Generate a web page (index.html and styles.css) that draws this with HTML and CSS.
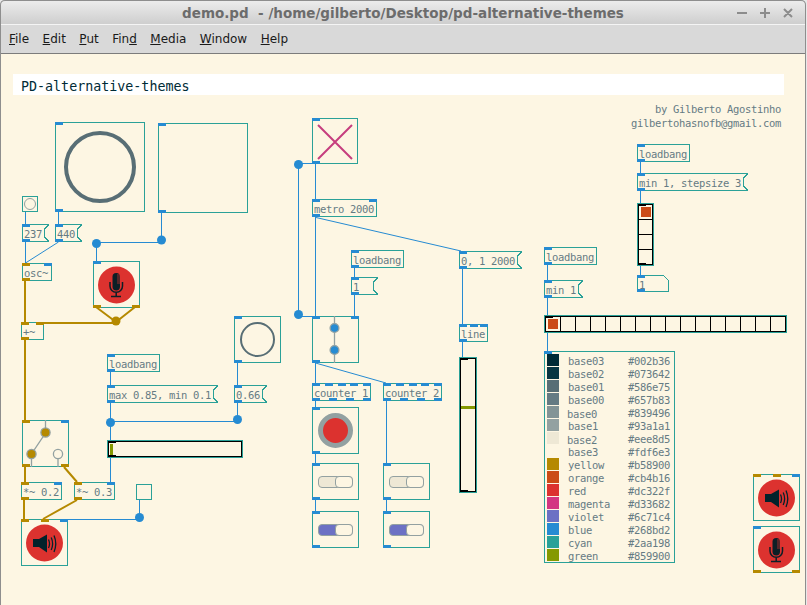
FILE: index.html
```html
<!DOCTYPE html>
<html lang="en">
<head>
  <meta charset="UTF-8" />
  <title>demo.pd - /home/gilberto/Desktop/pd-alternative-themes</title>
  <link rel="stylesheet" href="styles.css">
</head>
<body>

<div class="window">
  <div class="titlebar">
    <span></span>
    <div class="title">demo.pd &nbsp;- /home/gilberto/Desktop/pd-alternative-themes</div>
    <svg class="controls" width="56" height="12" viewBox="0 0 56 12">
      <path d="M0 6H10M23 6H33M28 1V11M47 2L55 10M55 2L47 10" />
    </svg>
  </div>

  <div class="menubar">
    <span><u>F</u>ile</span>
    <span><u>E</u>dit</span>
    <span><u>P</u>ut</span>
    <span>Fin<u>d</u></span>
    <span><u>M</u>edia</span>
    <span><u>W</u>indow</span>
    <span><u>H</u>elp</span>
  </div>

  <div class="canvas">
    <!-- patch cords, drawn under the objects -->
    <svg class="cords" width="806" height="551" viewBox="0 54 806 551">
      <defs>
        <symbol id="mic" viewBox="0 0 47 47">
          <circle cx="23.5" cy="24" r="18.5" fill="#dc322f" />
          <rect x="19.5" y="12" width="7.5" height="17.5" rx="3.7" fill="#0c1f26" />
          <path d="M24 14H27M24 16H27M24 18H27M24 20H27M24 22H27" stroke="#dc322f" stroke-width="0.7" />
          <path d="M17 21V25A6.2 6.2 0 0 0 29.5 25V21M23.2 31.5V35M18 35.5H28" fill="none" stroke="#0c1f26" stroke-width="1.5" />
        </symbol>
        <symbol id="speaker" viewBox="0 0 47 47">
          <circle cx="23.5" cy="24" r="18.5" fill="#dc322f" />
          <path d="M12 20H18L26 15.5V33.5L18 28H12Z" fill="#02222b" />
          <path d="M27.5 20.5Q29.5 24.5 27.5 29M30.2 18.5Q33 24.5 30.2 31M33 16.5Q36.5 24.5 33 33" fill="none" stroke="#02222b" stroke-width="1.3" />
        </symbol>
      </defs>
      <g class="ctl">
        <path d="M25.5 212V224M58.5 212V224M25.5 242V263M58.5 242L25.5 263" />
        <path d="M96.5 243V261M96.5 242.5H161.5M161.5 213V241" />
        <path d="M110.5 372V385M110.5 403V482M110.5 421.5H237.5M237.5 362V385M237.5 403V420" />
        <path d="M139.5 500V518M66 519.5H139.5" />
        <path d="M298.5 164V315M298.5 163.5H312M298.5 316.5H312" />
        <path d="M315.5 164V199M315.5 217V316M316 217.5L461 251" />
        <path d="M354.5 268V277M354.5 295V316M462.5 269V324M462.5 342V357" />
        <path d="M315.5 363V383M315.5 363L386 383M315.5 401V407M315.5 454V463M315.5 500V511" />
        <path d="M386.5 401V463M386.5 500V511" />
        <path d="M547.5 265V280M547.5 298V315M547.5 333V351" />
        <path d="M640.5 162V173M640.5 191V203M640.5 266V275" />
      </g>
      <g class="sig">
        <path d="M25 281V322M25 340V420M36 323H116M96 307L116 322M135 307L116 322" />
        <path d="M25 467V482M64 467L77 482M24 500V519M77 500L43 519" />
      </g>
      <g class="dots">
        <circle cx="96.5" cy="243.5" r="4.5" />
        <circle cx="161.5" cy="240" r="4.5" />
        <circle cx="110.5" cy="422.5" r="4.5" />
        <circle cx="237.5" cy="419.5" r="4.5" />
        <circle cx="139.5" cy="517.5" r="4.5" />
        <circle cx="298.5" cy="164.5" r="4.5" />
        <circle cx="298.5" cy="314.5" r="4.5" />
      </g>
      <circle cx="116" cy="321" r="4.5" fill="#b58900" />
    </svg>

    <div class="comment-bar">PD-alternative-themes</div>
    <div class="credits">by Gilberto Agostinho<br>gilbertohasnofb@gmail.com</div>

    <!-- left column -->
    <div class="node center n-vu1">
      <div class="ring ring-big"></div>
      <div class="ins"><i></i></div>
      <div class="outs"><i></i></div>
    </div>
    <div class="node n-cnv2">
      <div class="ins"><i></i></div>
      <div class="outs"><i></i></div>
    </div>
    <div class="node center n-bng1"><div class="ring ring-tiny"></div></div>
    <div class="node msg n-237">237<div class="ins"><i></i></div><div class="outs"><i></i></div></div>
    <div class="node msg n-440">440<div class="ins"><i></i></div><div class="outs"><i></i></div></div>
    <div class="node n-osc">osc~<div class="ins"><i class="y"></i><i></i></div><div class="outs"><i class="y"></i></div></div>
    <div class="node n-plus">+~<div class="ins"><i class="y"></i><i class="y"></i></div><div class="outs"><i class="y"></i></div></div>

    <div class="node n-mic1">
      <svg class="art" viewBox="0 0 47 47"><use href="#mic" /></svg>
      <div class="ins"><i></i></div>
      <div class="outs"><i class="y"></i><i class="y"></i></div>
    </div>

    <div class="node n-switch">
      <svg class="art" viewBox="0 0 47 47">
        <path class="wire" d="M23.5 0V13L9.5 34V47M36 34V47" />
        <circle class="knob-y" cx="23.5" cy="12.5" r="4.6" />
        <circle class="knob-y" cx="9.5" cy="34" r="4.6" />
        <circle class="knob-off" cx="36" cy="34" r="4.6" />
      </svg>
      <div class="ins"><i class="y"></i><i></i></div>
      <div class="outs"><i class="y"></i><i class="y"></i></div>
    </div>

    <div class="node n-mul2">*~ 0.2<div class="ins"><i class="y"></i><i></i></div><div class="outs"><i class="y"></i></div></div>
    <div class="node n-mul3">*~ 0.3<div class="ins"><i class="y"></i><i></i></div><div class="outs"><i class="y"></i></div></div>
    <div class="node n-bng2"></div>

    <div class="node n-spk1">
      <svg class="art" viewBox="0 0 47 47"><use href="#speaker" /></svg>
      <div class="ins"><i class="y"></i><i class="y"></i><i></i></div>
    </div>

    <div class="node n-lb1">loadbang<div class="ins"><i></i></div><div class="outs"><i></i></div></div>
    <div class="node msg n-max">max 0.85, min 0.1<div class="ins"><i></i></div><div class="outs"><i></i></div></div>
    <div class="node msg n-066">0.66<div class="ins"><i></i></div><div class="outs"><i></i></div></div>
    <div class="node center n-circ2">
      <div class="ring ring-mid"></div>
      <div class="ins"><i></i></div>
      <div class="outs"><i></i></div>
    </div>
    <div class="node slider n-hsl">
      <div class="track"><b class="mark-top"></b><b class="mark-bot"></b><b class="handle handle-h"></b></div>
    </div>

    <!-- middle column -->
    <div class="node n-x">
      <svg class="art" viewBox="0 0 46 46"><path class="cross" d="M6 7L40 41M40 7L6 41" /></svg>
      <div class="ins"><i></i></div>
      <div class="outs"><i></i></div>
    </div>
    <div class="node n-metro">metro 2000<div class="ins"><i></i><i></i></div><div class="outs"><i></i></div></div>
    <div class="node n-lb2">loadbang<div class="ins"><i></i></div><div class="outs"><i></i></div></div>
    <div class="node msg n-one">1<div class="ins"><i></i></div><div class="outs"><i></i></div></div>
    <div class="node msg n-seq">0, 1 2000<div class="ins"><i></i></div><div class="outs"><i></i></div></div>
    <div class="node n-line">line<div class="ins"><i></i><i></i><i></i></div><div class="outs"><i></i></div></div>

    <div class="node n-tgl">
      <svg class="art" viewBox="0 0 47 47">
        <path class="wire" d="M22.5 0V47" />
        <circle class="knob-b" cx="22.5" cy="12" r="4.4" />
        <circle class="knob-b" cx="22.5" cy="34" r="4.4" />
      </svg>
      <div class="ins"><i></i><i></i></div>
      <div class="outs"><i></i></div>
    </div>

    <div class="node n-c1">counter 1
      <div class="ins"><i></i><i></i><i></i><i></i><i></i></div>
      <div class="outs"><i></i><i></i><i></i><i></i></div>
    </div>
    <div class="node n-c2">counter 2
      <div class="ins"><i></i><i></i><i></i><i></i><i></i></div>
      <div class="outs"><i></i><i></i><i></i><i></i></div>
    </div>

    <div class="node center n-rec">
      <div class="ring ring-rec"></div>
      <div class="ins"><i></i></div>
      <div class="outs"><i></i></div>
    </div>

    <div class="node center n-p1a">
      <div class="pill"><span class="pill-knob"></span></div>
      <div class="ins"><i></i></div><div class="outs"><i></i></div>
    </div>
    <div class="node center n-p1b">
      <div class="pill pill-on"><span class="pill-knob"></span></div>
      <div class="ins"><i></i></div><div class="outs"><i></i></div>
    </div>
    <div class="node center n-p2a">
      <div class="pill"><span class="pill-knob"></span></div>
      <div class="ins"><i></i></div><div class="outs"><i></i></div>
    </div>
    <div class="node center n-p2b">
      <div class="pill pill-on"><span class="pill-knob"></span></div>
      <div class="ins"><i></i></div><div class="outs"><i></i></div>
    </div>

    <div class="node slider n-vsl">
      <div class="track"><b class="mark-top"></b><b class="mark-bot"></b><b class="handle handle-v"></b></div>
    </div>

    <!-- right column -->
    <div class="node n-lb3">loadbang<div class="ins"><i></i></div><div class="outs"><i></i></div></div>
    <div class="node msg n-min1">min 1<div class="ins"><i></i></div><div class="outs"><i></i></div></div>
    <div class="node radio n-hrad">
      <div class="cells cells-h"><b class="mark-top"></b><b class="picked"></b></div>
    </div>

    <div class="node n-lb4">loadbang<div class="ins"><i></i></div><div class="outs"><i></i></div></div>
    <div class="node msg n-step">min 1, stepsize 3<div class="ins"><i></i></div><div class="outs"><i></i></div></div>
    <div class="node radio n-vrad">
      <div class="cells cells-v"><b class="mark-top"></b><b class="mark-bot"></b><b class="picked"></b></div>
    </div>
    <div class="node atom n-atom">1<div class="ins"><i></i></div><div class="outs"><i></i></div></div>

    <div class="node n-palette">
      <div class="ins"><i></i></div>
      <div class="row"><span class="swatch c-base03"></span><span>base03</span><span>#002b36</span></div>
      <div class="row"><span class="swatch c-base02"></span><span>base02</span><span>#073642</span></div>
      <div class="row"><span class="swatch c-base01"></span><span>base01</span><span>#586e75</span></div>
      <div class="row"><span class="swatch c-base00"></span><span>base00</span><span>#657b83</span></div>
      <div class="row"><span class="swatch c-base0"></span><span class="nudge">base0</span><span>#839496</span></div>
      <div class="row"><span class="swatch c-base1"></span><span>base1</span><span>#93a1a1</span></div>
      <div class="row"><span class="swatch c-base2"></span><span class="nudge">base2</span><span>#eee8d5</span></div>
      <div class="row"><span class="swatch c-base3"></span><span>base3</span><span>#fdf6e3</span></div>
      <div class="row"><span class="swatch c-yellow"></span><span>yellow</span><span>#b58900</span></div>
      <div class="row"><span class="swatch c-orange"></span><span>orange</span><span>#cb4b16</span></div>
      <div class="row"><span class="swatch c-red"></span><span>red</span><span>#dc322f</span></div>
      <div class="row"><span class="swatch c-magenta"></span><span>magenta</span><span>#d33682</span></div>
      <div class="row"><span class="swatch c-violet"></span><span>violet</span><span>#6c71c4</span></div>
      <div class="row"><span class="swatch c-blue"></span><span>blue</span><span>#268bd2</span></div>
      <div class="row"><span class="swatch c-cyan"></span><span>cyan</span><span>#2aa198</span></div>
      <div class="row"><span class="swatch c-green"></span><span>green</span><span>#859900</span></div>
    </div>

    <div class="node n-spk2">
      <svg class="art" viewBox="0 0 47 47"><use href="#speaker" /></svg>
      <div class="ins"><i class="y"></i><i class="y"></i><i></i></div>
    </div>
    <div class="node n-mic2">
      <svg class="art" viewBox="0 0 47 47"><use href="#mic" /></svg>
      <div class="ins"><i></i></div>
      <div class="outs"><i class="y"></i><i class="y"></i></div>
    </div>
  </div>

  <div class="frame"></div>
</div>

</body>
</html>
```

FILE: styles.css
```css
* {
  box-sizing: border-box;
}

html, body {
  margin: 0;
  height: 100%;
  overflow: hidden;
  background: #e8e8e8;
}

.window {
  position: relative;
  width: 806px;
  height: 605px;
  display: flex;
  flex-direction: column;
}

/* window chrome */
.titlebar {
  height: 25px;
  display: grid;
  grid-template-columns: 1fr auto 1fr;
  align-items: center;
  background: linear-gradient(#ececec, #cecece);
  border-top: 1px solid #8e8e8e;
  border-bottom: 1px solid #f4f4f4;
  border-radius: 5px 5px 0 0;
}

.title {
  font: bold 13.5px "DejaVu Sans", sans-serif;
  color: #6c6c6c;
  white-space: nowrap;
}

.controls {
  justify-self: end;
  margin-right: 13px;
}

.controls path {
  fill: none;
  stroke: #8c8c8c;
  stroke-width: 2;
}

.menubar {
  height: 29px;
  display: flex;
  align-items: center;
  gap: 13.5px;
  padding: 0 0 0 9px;
  background: #d9d9d9;
  border-bottom: 1px solid #7c7c7c;
  font: 12px "DejaVu Sans", sans-serif;
  color: #1a1a1a;
}

.frame {
  position: absolute;
  left: 0;
  top: 0;
  width: 806px;
  height: 605px;
  border-left: 1px solid #8e8e8e;
  border-right: 1px solid #8e8e8e;
  border-radius: 5px 5px 0 0;
  pointer-events: none;
}

/* patch canvas */
.canvas {
  position: relative;
  flex: 1;
  background: #fdf6e3;
  font: 10.5px/18px "DejaVu Sans Mono", monospace;
  letter-spacing: -0.32px;
  color: #657b83;
}

.cords {
  position: absolute;
  left: 0;
  top: 0;
}

.ctl path {
  fill: none;
  stroke: #268bd2;
  stroke-width: 1;
}

.sig path {
  fill: none;
  stroke: #b58900;
  stroke-width: 2;
}

.dots circle {
  fill: #268bd2;
}

.comment-bar {
  position: absolute;
  left: 13px;
  top: 20px;
  width: 771px;
  height: 21px;
  padding-left: 8px;
  background: #fff;
  font-size: 13.33px;
  letter-spacing: 0;
  line-height: 25px;
  color: #002b36;
}

.credits {
  position: absolute;
  right: 25px;
  top: 48px;
  line-height: 14px;
  text-align: right;
}

/* objects */
.node {
  position: absolute;
  height: 18px;
  padding-left: 1px;
  border: 1px solid #2aa198;
  background: #fdf6e3;
  white-space: nowrap;
}

.center {
  display: flex;
  align-items: center;
  justify-content: center;
  padding: 0;
}

.ins, .outs {
  position: absolute;
  left: -1px;
  right: -1px;
  display: flex;
  justify-content: space-between;
}

.ins { top: -1px; }
.outs { bottom: -1px; }

.ins i, .outs i {
  width: 8px;
  height: 3px;
  background: #268bd2;
}

.ins i.y, .outs i.y {
  background: #b58900;
}

.art {
  position: absolute;
  left: -1px;
  top: -1px;
  width: calc(100% + 2px);
  height: calc(100% + 2px);
}

/* message box: the flag on the right side */
.msg {
  border-right: none;
}

.msg::after {
  content: "";
  position: absolute;
  right: 0;
  top: 0;
  bottom: 0;
  width: 5px;
  background:
    linear-gradient(#2aa198, #2aa198) 0 50% / 1px 8px no-repeat,
    linear-gradient(to bottom right, transparent calc(50% - 0.6px), #2aa198 calc(50% - 0.6px), #2aa198 calc(50% + 0.6px), transparent calc(50% + 0.6px)) 0 0 / 5px 4px no-repeat,
    linear-gradient(to top right, transparent calc(50% - 0.6px), #2aa198 calc(50% - 0.6px), #2aa198 calc(50% + 0.6px), transparent calc(50% + 0.6px)) 0 100% / 5px 4px no-repeat,
    #fdf6e3;
}

/* number box: the cut corner */
.atom::after {
  content: "";
  position: absolute;
  right: -1px;
  top: -1px;
  width: 6px;
  height: 6px;
  background: linear-gradient(to top right, transparent calc(50% - 0.6px), #2aa198 calc(50% - 0.6px), #2aa198 calc(50% + 0.6px), #fdf6e3 calc(50% + 0.6px));
}

.ring {
  border-style: solid;
  border-radius: 50%;
}

.ring-big {
  width: 72px;
  height: 72px;
  border-width: 4px;
  border-color: #586e75;
}

.ring-mid {
  width: 35px;
  height: 35px;
  border-width: 2px;
  border-color: #586e75;
}

.ring-tiny {
  width: 12px;
  height: 12px;
  border-width: 1px;
  border-color: #93a1a1;
}

.ring-rec {
  width: 35px;
  height: 35px;
  border-width: 5px;
  border-color: #93a1a1;
  background: #dc322f;
}

.wire {
  fill: none;
  stroke: #93a1a1;
  stroke-width: 1.3;
}

.knob-y, .knob-b, .knob-off {
  stroke: #93a1a1;
  stroke-width: 1.3;
}

.knob-y { fill: #b58900; }
.knob-b { fill: #268bd2; }
.knob-off { fill: #fdf6e3; }

.cross {
  fill: none;
  stroke: #c63e7e;
  stroke-width: 2;
}

/* toggle pill */
.pill {
  width: 35px;
  height: 12px;
  display: flex;
  justify-content: flex-end;
  border: 1px solid #93a1a1;
  border-radius: 4px;
  background: #eee8d5;
}

.pill-on {
  background: #6c71c4;
}

.pill-knob {
  width: 18px;
  margin: -1px -1px -1px 0;
  border: 1px solid #93a1a1;
  border-radius: 4px;
  background: #fdf6e3;
}

/* sliders and radios */
.slider, .radio {
  padding: 0;
}

.track, .cells {
  position: relative;
  width: 100%;
  height: 100%;
  border: 1px solid #000;
}

.mark-top, .mark-bot {
  position: absolute;
  left: 0;
  width: 7px;
  height: 2px;
  background: #000;
}

.mark-top { top: -1px; }
.mark-bot { bottom: -1px; }

.handle {
  position: absolute;
  background: #859900;
}

.handle-h {
  left: 1px;
  top: 2px;
  bottom: 1px;
  width: 3px;
}

.handle-v {
  left: 0;
  right: 0;
  top: 47px;
  height: 3px;
}

.cells-h {
  background: repeating-linear-gradient(to right, transparent 0 14px, #000 14px 15px);
}

.cells-v {
  background: repeating-linear-gradient(to bottom, transparent 0 14px, #000 14px 15px);
}

.picked {
  position: absolute;
  left: 2px;
  top: 2px;
  width: 10px;
  height: 10px;
  background: #cb4b16;
}

/* colour table */
.n-palette {
  padding: 2px 0 0 2px;
}

.row {
  height: 13px;
  display: grid;
  grid-template-columns: 12px 51px auto;
  column-gap: 9px;
  line-height: 14px;
}

.swatch {
  height: 12px;
}

.nudge {
  transform: translate(-1px, 1px);
}

.c-base03 { background: #002b36; }
.c-base02 { background: #073642; }
.c-base01 { background: #586e75; }
.c-base00 { background: #657b83; }
.c-base0 { background: #839496; }
.c-base1 { background: #93a1a1; }
.c-base2 { background: #eee8d5; }
.c-base3 { background: #fdf6e3; }
.c-yellow { background: #b58900; }
.c-orange { background: #cb4b16; }
.c-red { background: #dc322f; }
.c-magenta { background: #d33682; }
.c-violet { background: #6c71c4; }
.c-blue { background: #268bd2; }
.c-cyan { background: #2aa198; }
.c-green { background: #859900; }

/* places on the canvas (y counted from the top of the canvas) */
.n-vu1 { left: 55px; top: 68px; width: 90px; height: 90px; }
.n-cnv2 { left: 158px; top: 69px; width: 90px; height: 90px; }
.n-bng1 { left: 22px; top: 142px; width: 16px; height: 16px; }
.n-237 { left: 22px; top: 170px; width: 27px; }
.n-440 { left: 55px; top: 170px; width: 27px; }
.n-osc { left: 22px; top: 209px; width: 30px; }
.n-plus { left: 21px; top: 268px; width: 23px; }
.n-mic1 { left: 93px; top: 207px; width: 47px; height: 47px; }
.n-switch { left: 22px; top: 366px; width: 47px; height: 47px; }
.n-mul2 { left: 21px; top: 428px; width: 41px; }
.n-mul3 { left: 74px; top: 428px; width: 41px; }
.n-bng2 { left: 136px; top: 430px; width: 16px; height: 16px; }
.n-spk1 { left: 21px; top: 465px; width: 47px; height: 47px; }
.n-lb1 { left: 107px; top: 300px; width: 53px; }
.n-max { left: 107px; top: 331px; width: 111px; }
.n-066 { left: 234px; top: 331px; width: 33px; }
.n-circ2 { left: 234px; top: 262px; width: 47px; height: 47px; }
.n-hsl { left: 107px; top: 386px; width: 136px; }
.n-x { left: 312px; top: 64px; width: 46px; height: 46px; }
.n-metro { left: 312px; top: 145px; width: 65px; }
.n-lb2 { left: 351px; top: 196px; width: 53px; }
.n-one { left: 351px; top: 223px; width: 27px; }
.n-seq { left: 459px; top: 197px; width: 63px; }
.n-line { left: 459px; top: 270px; width: 29px; }
.n-tgl { left: 312px; top: 262px; width: 47px; height: 47px; }
.n-c1 { left: 312px; top: 329px; width: 59px; }
.n-c2 { left: 383px; top: 329px; width: 59px; }
.n-rec { left: 312px; top: 353px; width: 47px; height: 47px; }
.n-p1a { left: 312px; top: 409px; width: 47px; height: 37px; }
.n-p1b { left: 312px; top: 457px; width: 47px; height: 37px; }
.n-p2a { left: 383px; top: 409px; width: 47px; height: 37px; }
.n-p2b { left: 383px; top: 457px; width: 47px; height: 37px; }
.n-vsl { left: 459px; top: 303px; width: 18px; height: 136px; }
.n-lb3 { left: 544px; top: 193px; width: 53px; }
.n-min1 { left: 544px; top: 226px; width: 39px; }
.n-hrad { left: 544px; top: 261px; width: 243px; }
.n-lb4 { left: 637px; top: 90px; width: 53px; }
.n-step { left: 637px; top: 119px; width: 111px; }
.n-vrad { left: 637px; top: 149px; width: 17px; height: 63px; }
.n-atom { left: 637px; top: 221px; width: 32px; height: 17px; }
.n-palette { left: 544px; top: 297px; width: 131px; height: 212px; }
.n-spk2 { left: 753px; top: 420px; width: 47px; height: 47px; }
.n-mic2 { left: 753px; top: 472px; width: 47px; height: 47px; }
```
